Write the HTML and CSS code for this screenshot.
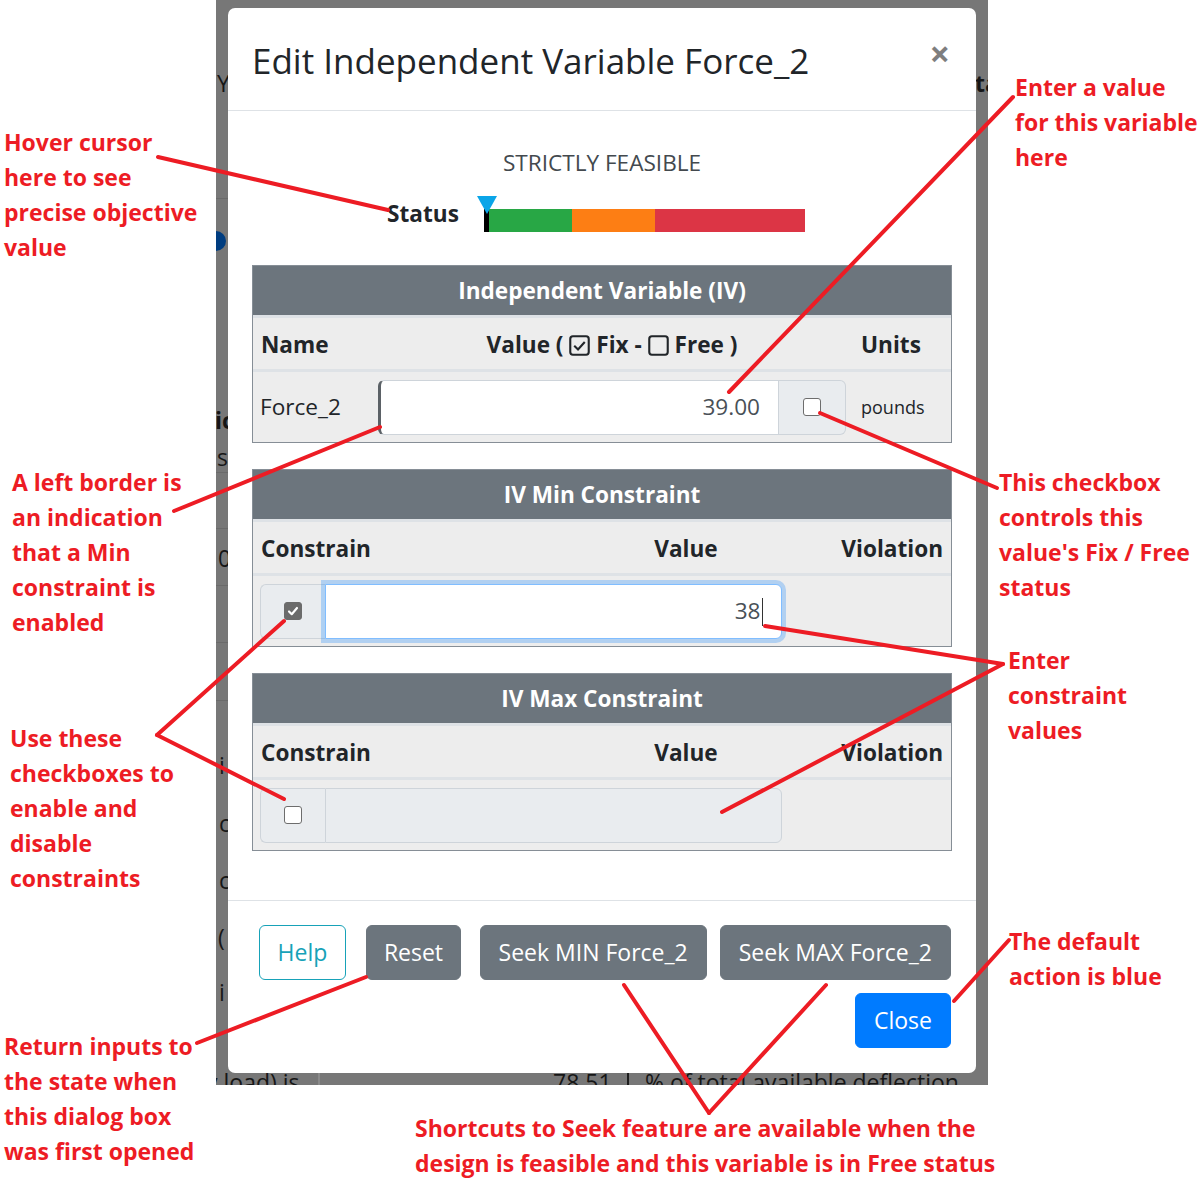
FILE: index.html
```html
<!DOCTYPE html>
<html lang="en">
<head>
<meta charset="utf-8">
<title>Edit Independent Variable Force_2</title>
<link rel="stylesheet" href="styles.css">
</head>
<body>
<div class="canvas">
  <div class="screen">
    <div class="behind">
      <span class="frag f-y">Y</span>
      <span class="frag f-ta">ta</span>
      <span class="hline h1"></span>
      <span class="dot"></span>
      <span class="frag f-ic">ic</span>
      <span class="frag f-s">s</span>
      <span class="hline h2"></span>
      <span class="hline h3"></span>
      <span class="frag f-0">0</span>
      <span class="hline h4"></span>
      <span class="hline h5"></span>
      <span class="hline h6"></span>
      <span class="frag f-i1">i</span>
      <span class="frag f-c1">c</span>
      <span class="frag f-c2">c</span>
      <span class="frag f-par">(</span>
      <span class="frag f-i2">i</span>
      <span class="frag br-label">y load) is</span>
      <span class="br-sep light"></span>
      <span class="frag br-num">78.51</span>
      <span class="br-sep dark"></span>
      <span class="frag br-text">% of total available deflection</span>
    </div>

    <div class="modal">
      <div class="modal-header">
        <h4 class="modal-title">Edit Independent Variable Force_2</h4>
        <span class="close">×</span>
      </div>

      <div class="modal-body">
        <div class="feas">STRICTLY FEASIBLE</div>
        <div class="status-row">
          <b class="status-label">Status</b>
          <div class="bar">
            <span class="marker"></span>
            <span class="seg tick"></span>
            <span class="seg green"></span>
            <span class="seg orange"></span>
            <span class="seg red"></span>
          </div>
        </div>

        <table class="tbl">
          <colgroup><col class="w-name"><col><col class="w-units"></colgroup>
          <thead>
            <tr><th colspan="3" class="cap">Independent Variable (IV)</th></tr>
            <tr class="sub">
              <th>Name</th>
              <th class="center">Value (
                <svg class="hd-icon" viewBox="0 0 20 20"><rect x="1.2" y="1.2" width="17.6" height="17.6" rx="2.5" fill="none" stroke="#212529" stroke-width="2"/><path d="M5 10.2 L8.6 13.8 L15 6.6" fill="none" stroke="#212529" stroke-width="2"/></svg>
                Fix -
                <svg class="hd-icon" viewBox="0 0 20 20"><rect x="1.2" y="1.2" width="17.6" height="17.6" rx="2.5" fill="none" stroke="#212529" stroke-width="2"/></svg>
                Free )</th>
              <th>Units</th>
            </tr>
          </thead>
          <tbody>
            <tr>
              <td class="name">Force_2</td>
              <td>
                <div class="ig">
                  <div class="ig-input minb">39.00</div>
                  <div class="ig-append"><span class="cb"></span></div>
                </div>
              </td>
              <td class="units">pounds</td>
            </tr>
          </tbody>
        </table>

        <table class="tbl">
          <colgroup><col class="w-con"><col class="w-val"><col></colgroup>
          <thead>
            <tr><th colspan="3" class="cap">IV Min Constraint</th></tr>
            <tr class="sub">
              <th>Constrain</th>
              <th class="center">Value</th>
              <th class="right">Violation</th>
            </tr>
          </thead>
          <tbody>
            <tr>
              <td colspan="2" class="span">
                <div class="ig">
                  <div class="ig-prepend"><span class="cb on"><svg viewBox="0 0 18 18"><path d="M4.5 9.5 L7.6 12.6 L13.5 5.6" fill="none" stroke="#fff" stroke-width="2.4" stroke-linecap="round" stroke-linejoin="round"/></svg></span></div>
                  <div class="ig-input focus">38<span class="caret"></span></div>
                </div>
              </td>
              <td></td>
            </tr>
          </tbody>
        </table>

        <table class="tbl">
          <colgroup><col class="w-con"><col class="w-val"><col></colgroup>
          <thead>
            <tr><th colspan="3" class="cap">IV Max Constraint</th></tr>
            <tr class="sub">
              <th>Constrain</th>
              <th class="center">Value</th>
              <th class="right">Violation</th>
            </tr>
          </thead>
          <tbody>
            <tr>
              <td colspan="2" class="span">
                <div class="ig">
                  <div class="ig-prepend"><span class="cb"></span></div>
                  <div class="ig-input disabled"></div>
                </div>
              </td>
              <td></td>
            </tr>
          </tbody>
        </table>
      </div>

      <div class="modal-footer">
        <div class="f-row">
          <button class="btn btn-help">Help</button>
          <button class="btn btn-sec btn-reset">Reset</button>
          <button class="btn btn-sec btn-min">Seek MIN Force_2</button>
          <button class="btn btn-sec">Seek MAX Force_2</button>
        </div>
        <div class="f-row f-row2">
          <button class="btn btn-primary">Close</button>
        </div>
      </div>
    </div>
  </div>

  <div class="note n-hover">Hover cursor<br>here to see<br>precise objective<br>value</div>
  <div class="note n-enter">Enter a value<br>for this variable<br>here</div>
  <div class="note n-left">A left border is<br>an indication<br>that a Min<br>constraint is<br>enabled</div>
  <div class="note n-check">This checkbox<br>controls this<br>value's Fix / Free<br>status</div>
  <div class="note n-cons">Enter<br>constraint<br>values</div>
  <div class="note n-use">Use these<br>checkboxes to<br>enable and<br>disable<br>constraints</div>
  <div class="note n-default">The default<br>action is blue</div>
  <div class="note n-return">Return inputs to<br>the state when<br>this dialog box<br>was first opened</div>
  <div class="note n-seek">Shortcuts to Seek feature are available when the<br>design is feasible and this variable is in Free status</div>

  <svg class="arrows" width="1200" height="1200" viewBox="0 0 1200 1200">
    <g stroke="#ed1c24" stroke-width="4" stroke-linecap="round" fill="none">
      <line x1="158" y1="157" x2="388" y2="210"/>
      <line x1="1013" y1="97" x2="729" y2="392"/>
      <line x1="174" y1="511" x2="380" y2="427"/>
      <line x1="997" y1="488" x2="820" y2="413"/>
      <line x1="1003" y1="664" x2="765" y2="626"/>
      <line x1="1003" y1="664" x2="722" y2="812"/>
      <line x1="157" y1="735" x2="284" y2="621"/>
      <line x1="157" y1="735" x2="284" y2="799"/>
      <line x1="1009" y1="940" x2="954" y2="1001"/>
      <line x1="197" y1="1043" x2="366" y2="977"/>
      <line x1="709" y1="1113" x2="624" y2="985"/>
      <line x1="709" y1="1113" x2="826" y2="985"/>
    </g>
  </svg>
</div>
</body>
</html>
```

FILE: styles.css
```css
* { box-sizing: border-box; }

html, body {
  margin: 0;
  padding: 0;
  background: #fff;
}

body {
  font-family: "Open Sans", "Noto Sans", sans-serif;
  color: #212529;
}

.canvas {
  position: relative;
  width: 1200px;
  height: 1200px;
  overflow: hidden;
  padding-left: 216px;
}

/* ---------- the screenshot window ---------- */
.screen {
  position: relative;
  width: 772px;
  height: 1085px;
  background: #777;
  padding: 8px 12px 12px;
  overflow: hidden;
}

.behind {
  position: absolute;
  inset: 0;
  font-size: 23px;
  line-height: 36px;
  color: #161616;
}

.frag { position: absolute; left: 1px; white-space: nowrap; }
.f-y { top: 65px; }
.f-ta { left: 759px; top: 65px; font-weight: 700; }
.f-ic { left: -1px; top: 402px; font-weight: 700; }
.f-s { top: 439px; }
.f-0 { left: 2px; top: 540px; }
.f-i1 { left: 3px; top: 747px; }
.f-c1 { left: 3px; top: 805px; }
.f-c2 { left: 3px; top: 862px; }
.f-par { left: 2px; top: 919px; }
.f-i2 { left: 3px; top: 974px; }

.hline {
  position: absolute;
  left: 0;
  width: 12px;
  height: 1px;
  background: #6a6a6a;
}
.h1 { top: 198px; }
.h2 { top: 472px; }
.h3 { top: 528px; }
.h4 { top: 585px; }
.h5 { top: 642px; }
.h6 { top: 700px; }

.dot {
  position: absolute;
  left: -10px;
  top: 231px;
  width: 20px;
  height: 20px;
  border-radius: 50%;
  background: #003d80;
}

.br-label { left: -10px; top: 1064px; }
.br-num { left: 337px; top: 1064px; }
.br-text { left: 429px; top: 1064px; }
.br-sep {
  position: absolute;
  top: 1072px;
  width: 2px;
  height: 20px;
}
.br-sep.light { left: 102px; background: #8a8a8a; }
.br-sep.dark { left: 411px; background: #1d1d1d; }

/* ---------- modal ---------- */
.modal {
  position: relative;
  z-index: 1;
  background: #fff;
  border-radius: 7px;
  height: 1065px;
  display: flex;
  flex-direction: column;
}

.modal-header {
  display: flex;
  align-items: flex-start;
  padding: 24px;
  border-bottom: 1.5px solid #dee2e6;
}

.modal-title {
  margin: 2px 0 -2px;
  flex: 1;
  font-size: 35px;
  font-weight: 400;
  line-height: 54px;
  color: #212529;
}

.close {
  font-size: 36px;
  font-weight: 700;
  line-height: 44px;
  color: #000;
  opacity: 0.5;
  margin-right: 2px;
}

.modal-body {
  padding: 24px 24px 0;
  flex: 1;
}

.feas {
  margin-top: 10px;
  text-align: center;
  font-size: 22.6px;
  line-height: 36px;
  color: #43494e;
}

.status-row {
  display: flex;
  justify-content: center;
  gap: 25px;
  margin-top: 13px;
  padding-right: 12px;
  height: 37px;
}

.status-label {
  font-size: 22.6px;
  line-height: 36px;
  padding-top: 2px;
  font-weight: 700;
}

.bar {
  position: relative;
  display: flex;
  padding-top: 15px;
  height: 38px;
}

.seg { display: block; height: 23px; }
.tick { width: 5px; background: #000; }
.green { width: 83px; background: #28a745; }
.orange { width: 83px; background: #fd7e14; }
.red { width: 150px; background: #dc3545; }

.marker {
  position: absolute;
  left: -7px;
  top: 2px;
  width: 0;
  height: 0;
  border-left: 10px solid transparent;
  border-right: 10px solid transparent;
  border-top: 18px solid #0aa5e8;
}

/* ---------- tables ---------- */
.tbl {
  width: 100%;
  margin-top: 34px;
  border-collapse: separate;
  border-spacing: 0;
  border: 1px solid #868e96;
  table-layout: fixed;
  font-size: 22.6px;
  line-height: 36px;
}
.tbl + .tbl { margin-top: 26px; }

.w-name { width: 118px; }
.w-units { width: 98px; }
.w-con { width: 333px; }
.w-val { width: 200px; }

.tbl th.cap {
  background: #6c757d;
  color: #fff;
  font-weight: 700;
  text-align: center;
  padding: 6.5px 0;
  border-bottom: 3px solid #dee2e6;
}

.tbl .sub th {
  background: #ededed;
  padding: 9px 8px 6px;
  font-weight: 700;
  text-align: left;
  white-space: nowrap;
  border-bottom: 3px solid #dee2e6;
}
.tbl .sub th.center { text-align: center; }
.tbl .sub th.right { text-align: right; }

.hd-icon {
  width: 21px;
  height: 21px;
  vertical-align: -3px;
}

.tbl td {
  background: #ededed;
  padding: 7.5px 7px;
  vertical-align: middle;
  white-space: nowrap;
}
.tbl td.span { padding-right: 4px; }
.tbl td.units { font-size: 18px; padding-left: 8px; }

/* ---------- input groups ---------- */
.ig {
  display: flex;
  height: 55px;
}

.ig-input {
  flex: 1;
  background: #fff;
  border: 1.5px solid #ced4da;
  text-align: right;
  padding: 0 18px;
  line-height: 52px;
  font-size: 22.6px;
  color: #495057;
}

.ig-input.minb {
  border-left: 3px solid #5b6166;
  border-radius: 6px 0 0 6px;
}

.ig-input.focus {
  border-color: #80bdff;
  border-radius: 0 6px 6px 0;
  box-shadow: 0 0 0 4px rgba(0, 123, 255, 0.25);
  position: relative;
}

.caret {
  display: inline-block;
  width: 1.5px;
  height: 28px;
  background: #333;
  vertical-align: -7px;
  margin-left: 1px;
}

.ig-input.disabled {
  background: #e9ecef;
  border-radius: 0 6px 6px 0;
}

.ig-append,
.ig-prepend {
  display: flex;
  align-items: center;
  justify-content: center;
  background: #e9ecef;
  border: 1.5px solid #ced4da;
}

.ig-append {
  width: 67px;
  border-left: 0;
  border-radius: 0 6px 6px 0;
}

.ig-prepend {
  width: 65px;
  border-right: 0;
  border-radius: 6px 0 0 6px;
}

.cb {
  display: block;
  width: 18px;
  height: 18px;
  border: 1.5px solid #6d6d6d;
  border-radius: 3px;
  background: #fff;
}

.cb.on {
  background: #6b6b6b;
  border-color: #6b6b6b;
}
.cb svg { display: block; width: 100%; height: 100%; }

/* ---------- footer ---------- */
.modal-footer {
  border-top: 1.5px solid #dee2e6;
  padding: 24px 25px 25px 24px;
  display: flex;
  flex-direction: column;
  align-items: flex-end;
}

.f-row {
  display: flex;
  justify-content: flex-end;
}
.f-row2 { margin-top: 13px; }

.btn {
  font-family: "Open Sans", "Noto Sans", sans-serif;
  font-size: 23px;
  line-height: 35px;
  height: 55px;
  padding: 0 18px;
  border: 1.5px solid transparent;
  border-radius: 6px;
  background: none;
  color: #fff;
}

.btn-help {
  color: #17a2b8;
  border-color: #17a2b8;
  background: #fff;
  margin-right: 20px;
}

.btn-sec {
  background: #6c757d;
  border-color: #6c757d;
}
.btn-reset { margin-right: 19px; padding: 0 16.5px; }
.btn-min { margin-right: 13px; }

.btn-primary {
  background: #007bff;
  border-color: #007bff;
}

/* ---------- annotations ---------- */
.note {
  position: absolute;
  z-index: 2;
  color: #ed1c24;
  font-weight: 700;
  font-size: 23px;
  line-height: 35px;
  white-space: nowrap;
}

.n-hover { left: 4px; top: 125px; }
.n-enter { left: 1015px; top: 70px; }
.n-left { left: 12px; top: 465px; }
.n-check { left: 999px; top: 465px; }
.n-cons { left: 1008px; top: 643px; }
.n-use { left: 10px; top: 721px; }
.n-default { left: 1009px; top: 924px; }
.n-return { left: 4px; top: 1029px; }
.n-seek { left: 415px; top: 1111px; }

.arrows {
  position: absolute;
  z-index: 3;
  left: 0;
  top: 0;
  pointer-events: none;
}
```
